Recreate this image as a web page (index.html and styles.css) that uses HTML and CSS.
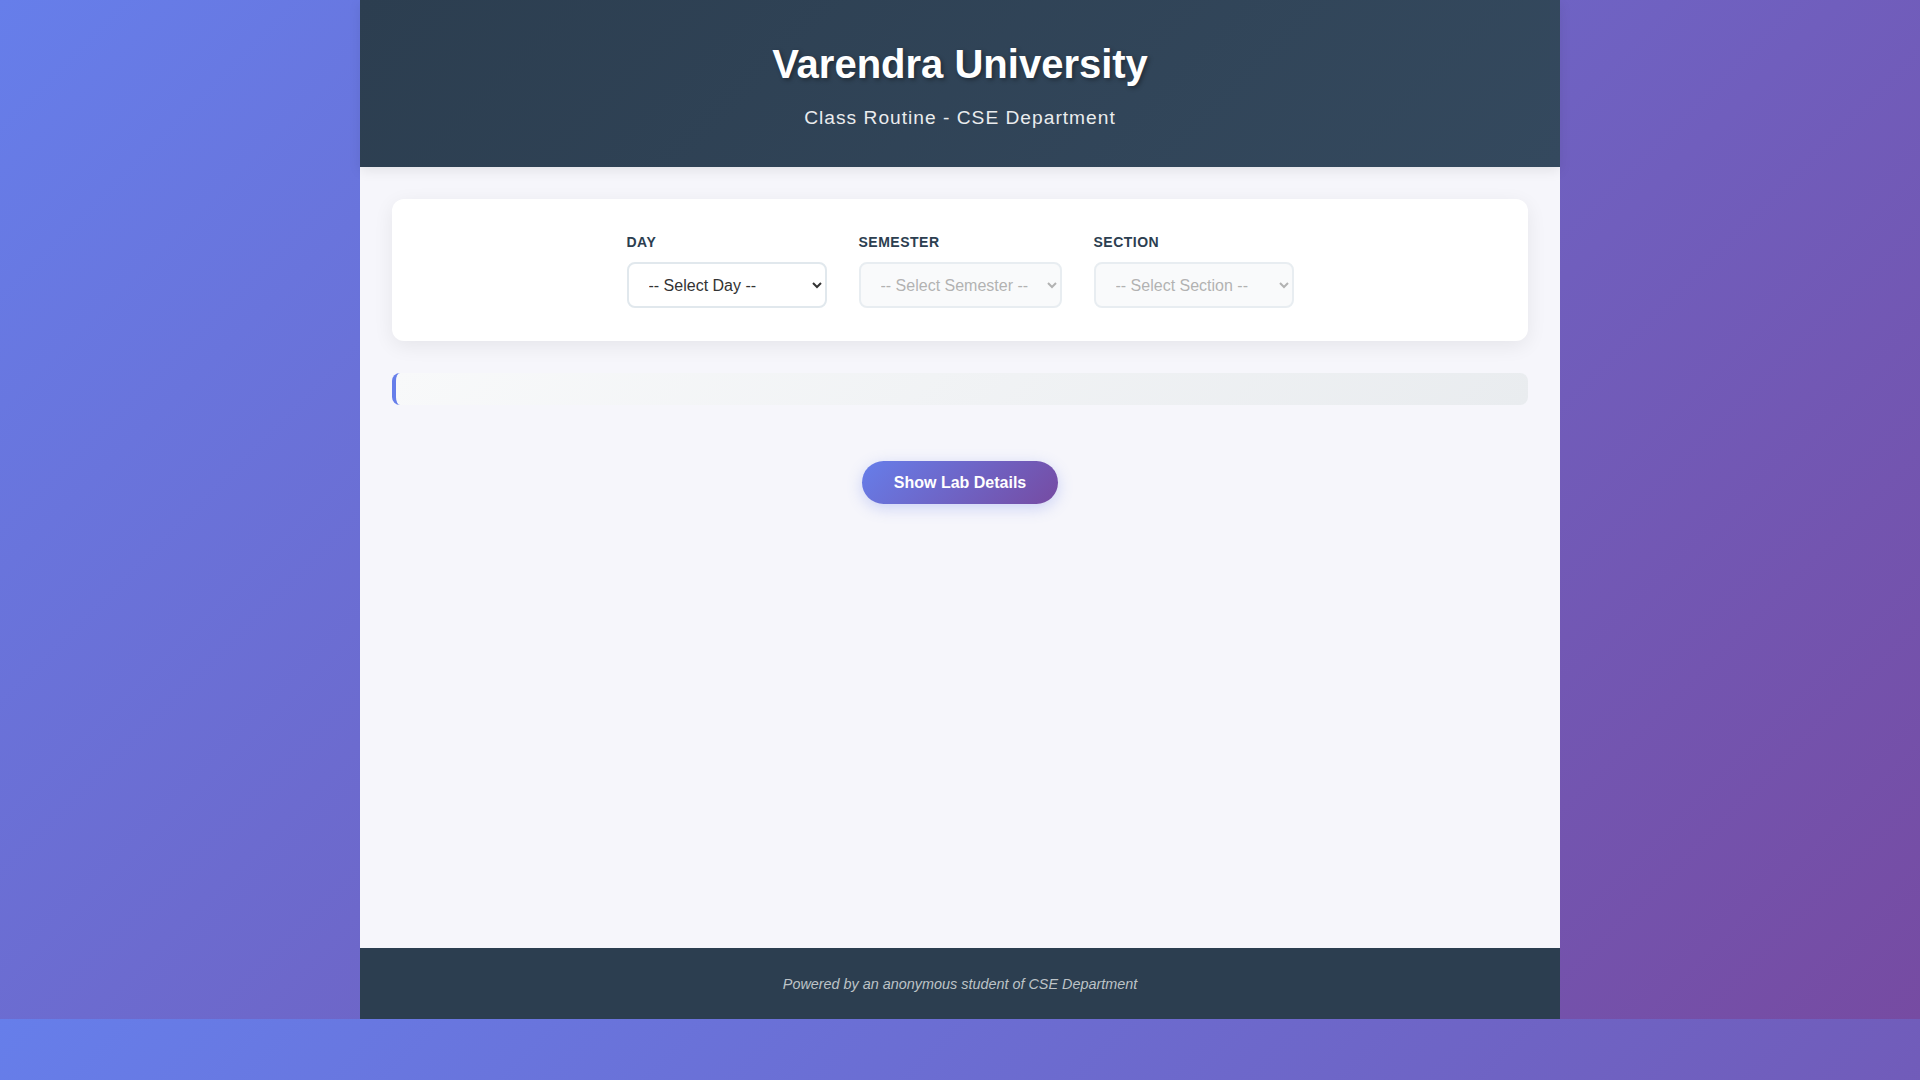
FILE: index.html
```html
<!DOCTYPE html>
<html lang="en">
<head>
<meta charset="UTF-8">
<title>Varendra University - Class Routine</title>
<link rel="stylesheet" href="styles.css">
</head>
<body>
<div class="container">
  <header class="header">
    <h1 class="title">Varendra University</h1>
    <p class="subtitle">Class Routine - CSE Department</p>
  </header>
  <main class="main">
    <section class="filters">
      <div class="filter-group">
        <label class="filter-label" for="day">Day</label>
        <select id="day" class="filter-select">
          <option>-- Select Day --</option>
        </select>
      </div>
      <div class="filter-group">
        <label class="filter-label" for="semester">Semester</label>
        <select id="semester" class="filter-select" disabled>
          <option>-- Select Semester --</option>
        </select>
      </div>
      <div class="filter-group">
        <label class="filter-label" for="section">Section</label>
        <select id="section" class="filter-select" disabled>
          <option>-- Select Section --</option>
        </select>
      </div>
    </section>
    <div class="info-bar"></div>
    <div class="actions">
      <button class="lab-btn" type="button">Show Lab Details</button>
    </div>
  </main>
  <footer class="footer">
    <p class="footer-text">Powered by an anonymous student of CSE Department</p>
  </footer>
</div>
</body>
</html>
```
FILE: styles.css
```css
* {
  box-sizing: border-box;
}

body {
  margin: 0;
  font-family: "Liberation Sans", Arial, sans-serif;
  background: linear-gradient(135deg, #667eea 0%, #764ba2 100%);
}

.container {
  width: 1200px;
  margin: 0 auto;
  background: #f6f6fb;
}

.header {
  height: 167px;
  padding-top: 40px;
  text-align: center;
  color: #ffffff;
  background: linear-gradient(135deg, #2c3e50 0%, #34495e 100%);
  box-shadow: 0 4px 12px rgba(0, 0, 0, 0.08);
  position: relative;
  z-index: 1;
}

.title {
  margin: 0;
  font-size: 40px;
  line-height: 48px;
  font-weight: 700;
  text-shadow: 2px 2px 4px rgba(0, 0, 0, 0.35);
}

.subtitle {
  margin: 18px 0 0;
  font-size: 19.2px;
  line-height: 24px;
  letter-spacing: 1px;
  opacity: 0.9;
}

.main {
  height: 781px;
  padding: 32px;
}

.filters {
  background: #ffffff;
  border-radius: 12px;
  box-shadow: 0 5px 20px rgba(0, 0, 0, 0.07);
  padding: 35px 32px 33px;
  display: flex;
  justify-content: center;
  gap: 32px;
}

.filter-group {
  display: flex;
  flex-direction: column;
}

.filter-label {
  font-size: 14px;
  line-height: 17px;
  font-weight: 700;
  color: #2c3e50;
  text-transform: uppercase;
  letter-spacing: 0.5px;
  margin-bottom: 11px;
}

.filter-select {
  min-width: 200px;
  height: 46px;
  padding: 0 15px 0 16px;
  font-family: "Liberation Sans", Arial, sans-serif;
  font-size: 16px;
  color: #333333;
  background: #ffffff;
  border: 2px solid #e1e8ed;
  border-radius: 8px;
}

.filter-select:disabled {
  background: #f8f9fa;
  color: #999999;
  opacity: 0.75;
}

.info-bar {
  margin-top: 32px;
  height: 32px;
  border-left: 4px solid #667eea;
  border-radius: 8px;
  background: linear-gradient(135deg, #f8f9fa 0%, #e9ecef 100%);
}

.actions {
  margin-top: 56px;
  display: flex;
  justify-content: center;
}

.lab-btn {
  width: 196px;
  height: 43px;
  border: none;
  border-radius: 25px;
  font-family: "Liberation Sans", Arial, sans-serif;
  font-size: 16px;
  font-weight: 700;
  color: #ffffff;
  background: linear-gradient(135deg, #667eea 0%, #764ba2 100%);
  box-shadow: 0 4px 15px rgba(102, 126, 234, 0.3);
}

.footer {
  height: 71px;
  background: #2c3e50;
  display: flex;
  align-items: center;
  justify-content: center;
}

.footer-text {
  margin: 0;
  font-size: 14.4px;
  font-style: italic;
  color: #bdc3c7;
}
```
